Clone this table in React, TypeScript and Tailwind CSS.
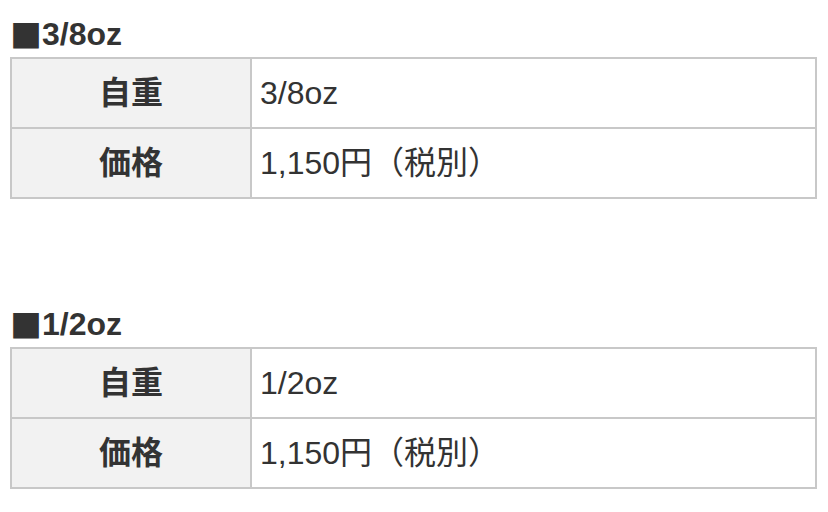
import React from "react";

const font = { fontFamily: '"Liberation Sans", "Noto Sans CJK JP", sans-serif' };

function Spec({ title, weight, price, first }: { title: string; weight: string; price: string; first?: boolean }) {
  return (
    <section className={first ? "pt-[11px]" : "mt-[102px]"}>
      <h2 className="ml-[10px] flex h-[46px] items-center text-[32px] leading-[46px] font-bold text-[#333333]">
        <span className="leading-[46px]" style={{ fontFamily: '"Noto Sans CJK JP", sans-serif' }}>■</span>
        <span className="leading-[46px]">{title}</span>
      </h2>
      <div className="ml-[10px] w-[807px] border-2 border-[#c8c8c8] text-[32px] text-[#333333]">
        <div className="flex h-[68px]">
          <div className="flex w-[240px] items-center justify-center border-r-2 border-[#c8c8c8] bg-[#f2f2f2] font-bold">
            自重
          </div>
          <div className="flex flex-1 items-center pl-[8px]">{weight}</div>
        </div>
        <div className="flex h-[70px] border-t-2 border-[#c8c8c8]">
          <div className="flex w-[240px] items-center justify-center border-r-2 border-[#c8c8c8] bg-[#f2f2f2] font-bold">
            価格
          </div>
          <div className="flex flex-1 items-center pl-[8px]">{price}</div>
        </div>
      </div>
    </section>
  );
}

export default function App() {
  return (
    <div className="h-[512px] w-[828px] overflow-hidden bg-white" style={font}>
      <Spec first title="3/8oz" weight="3/8oz" price="1,150円（税別）" />
      <Spec title="1/2oz" weight="1/2oz" price="1,150円（税別）" />
    </div>
  );
}
